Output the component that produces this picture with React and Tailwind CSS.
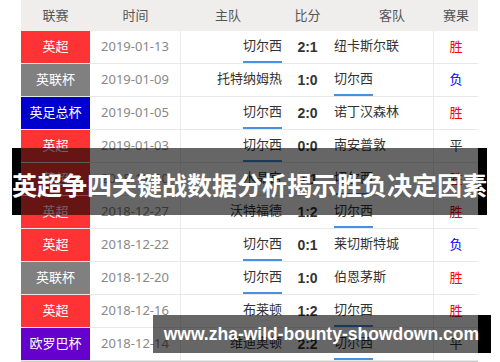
const rows = [
  { lg: "英超", c: "bg-[#ff3333]", d: "2019-01-13", h: "切尔西", s: "2:1", a: "纽卡斯尔联", r: "胜", hu: true },
  { lg: "英联杯", c: "bg-[#808080]", d: "2019-01-09", h: "托特纳姆热", s: "1:0", a: "切尔西", r: "负", au: true },
  { lg: "英足总杯", c: "bg-[#0000cc]", d: "2019-01-05", h: "切尔西", s: "2:0", a: "诺丁汉森林", r: "胜", hu: true },
  { lg: "英超", c: "bg-[#ff3333]", d: "2019-01-03", h: "切尔西", s: "0:0", a: "南安普敦", r: "平", hu: true },
  { lg: "英超", c: "bg-[#ff3333]", d: "2018-12-30", h: "水晶宫", s: "0:1", a: "切尔西", r: "胜", au: true },
  { lg: "英超", c: "bg-[#ff3333]", d: "2018-12-27", h: "沃特福德", s: "1:2", a: "切尔西", r: "胜", au: true },
  { lg: "英超", c: "bg-[#ff3333]", d: "2018-12-22", h: "切尔西", s: "0:1", a: "莱切斯特城", r: "负", hu: true },
  { lg: "英联杯", c: "bg-[#808080]", d: "2018-12-20", h: "切尔西", s: "1:0", a: "伯恩茅斯", r: "胜", hu: true },
  { lg: "英超", c: "bg-[#ff3333]", d: "2018-12-16", h: "布莱顿", s: "1:2", a: "切尔西", r: "胜", au: true },
  { lg: "欧罗巴杯", c: "bg-[#6600cc]", d: "2018-12-14", h: "维迪奥顿", s: "2:2", a: "切尔西", r: "平", au: true },
];

const resColor = { 胜: "text-[#ff0000]", 负: "text-[#0000ff]", 平: "text-[#333333]" };

function Team({ name, u }) {
  return (
    <span
      className={
        "h-full flex items-center border-b-2 " +
        (u ? "border-[#4a90e2]" : "border-transparent")
      }
    >
      {name}
    </span>
  );
}

export default function App() {
  return (
    <div
      className="relative w-[500px] h-[362px] overflow-hidden bg-white"
      style={{ fontFamily: '"Noto Sans", "Noto Sans CJK SC", sans-serif' }}
    >
      <div className="ml-[21px] w-[457px] flex flex-col">
        <div className="h-[31px] flex items-center bg-[#efeeec] text-[13px] text-[#555555]">
          <div className="w-[69px] text-center">联赛</div>
          <div className="w-[91px] text-center">时间</div>
          <div className="w-[104px] text-center pr-[10px]">主队</div>
          <div className="w-[45px] text-center">比分</div>
          <div className="w-[104px] text-center pl-[20px]">客队</div>
          <div className="w-[44px] text-center">赛果</div>
        </div>
        {rows.map((r, i) => (
          <div key={i} className="h-[33px] flex border-b border-[#e8e8e8] text-[13px]">
            <div className={"w-[69px] flex items-center justify-center text-white " + r.c}>{r.lg}</div>
            <div className="w-[91px] flex items-center justify-center text-[#888888] border-r border-[#ebebeb]">{r.d}</div>
            <div className="w-[104px] flex justify-end pr-[3px] text-[#333333]">
              <Team name={r.h} u={r.hu} />
            </div>
            <div
              className="w-[45px] flex items-center justify-center font-bold text-[14px] text-[#333333]"
              style={{ fontFamily: '"Liberation Sans", sans-serif' }}
            >
              {r.s}
            </div>
            <div className="w-[104px] flex justify-start pl-[4px] text-[#333333] border-r border-[#ebebeb]">
              <Team name={r.a} u={r.au} />
            </div>
            <div className={"w-[44px] flex items-center justify-center " + resColor[r.r]}>{r.r}</div>
          </div>
        ))}
        <div className="h-[1px] bg-[#cccccc]" />
      </div>

      <div className="absolute left-[12px] top-[148px] w-[475px] h-[67px] flex">
        <div className="w-[9px] bg-black" />
        <div className="flex-1 bg-black/60" />
        <div className="w-[9px] bg-black" />
        <div
          className="absolute inset-0 flex items-center justify-center pt-[7px] text-white font-bold text-[25px] whitespace-nowrap"
          style={{ fontFamily: '"Noto Sans CJK SC", sans-serif' }}
        >
          英超争四关键战数据分析揭示胜负决定因素
        </div>
      </div>

      <div className="absolute left-[153px] top-[315px] w-[338px] h-[38px] flex">
        <div className="flex-1 bg-black/60" />
        <div className="w-[13px] bg-black" />
        <div
          className="absolute inset-0 flex items-center justify-end pr-[12px] pt-[1px] text-white font-bold text-[17.5px] whitespace-nowrap"
          style={{ fontFamily: '"Liberation Sans", sans-serif' }}
        >
          www.zha-wild-bounty-showdown.com
        </div>
      </div>
    </div>
  );
}
